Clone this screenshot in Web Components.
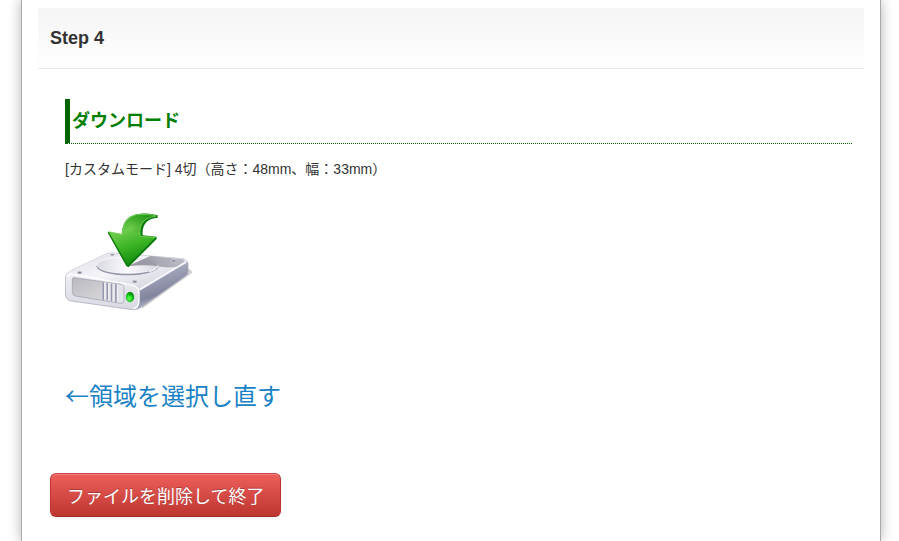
<!DOCTYPE html>
<html lang="ja">
<head>
<meta charset="utf-8">
<title>Step 4</title>
<style>
  body {
    margin: 0;
    background-color: #fff;
    color: #333;
    font: 14px/20px "Liberation Sans", "Noto Sans CJK JP", sans-serif;
  }
</style>
</head>
<body>
<page-panel>
  <step-header>Step 4</step-header>
  <download-section heading="ダウンロード">
    <span slot="info">[カスタムモード] 4切（高さ：48mm、幅：33mm）</span>
    <drive-icon slot="icon"></drive-icon>
    <span slot="back">←領域を選択し直す</span>
  </download-section>
  <danger-button>ファイルを削除して終了</danger-button>
</page-panel>

<script>
class PagePanel extends HTMLElement {
  constructor() {
    super();
    this.attachShadow({mode: "open"});
  }

  style() {
    const css = `
    <style>
      :host {
        display: block;
        box-sizing: border-box;
        min-height: 100vh;
        margin: 0 18px 0 21px;
        padding: 8px 16px 24px;
        border: solid #aaa;
        border-width: 0 1px;
        background-color: #fff;
        box-shadow: 0 0 12px rgba(0, 0, 0, 0.3);
        clip-path: inset(0 -18px);
      }
    </style>
    `;
    return css;
  }

  connectedCallback() {
    this.shadowRoot.innerHTML = `${this.style()}<slot></slot>`;
  }
}

class StepHeader extends HTMLElement {
  constructor() {
    super();
    this.attachShadow({mode: "open"});
  }

  style() {
    const css = `
    <style>
      :host {
        display: block;
        padding: 20px 12px;
        border-bottom: 1px solid #e8e8e8;
        background-image: linear-gradient(#f4f4f4, #fff);
      }
      h2 {
        margin: 0;
        font-size: 18px;
        line-height: 20px;
      }
    </style>
    `;
    return css;
  }

  connectedCallback() {
    this.shadowRoot.innerHTML = `${this.style()}<h2><slot></slot></h2>`;
  }
}

class DownloadSection extends HTMLElement {
  constructor() {
    super();
    this.attachShadow({mode: "open"});
  }

  style() {
    const css = `
    <style>
      :host {
        display: block;
        padding: 30px 12px 62px 27px;
      }
      h3 {
        margin: 0 0 15px;
        padding: 12px 2px;
        border-left: 5px solid #006400;
        border-bottom: 1px dotted #006400;
        color: #008000;
        font-size: 18px;
        line-height: 20px;
      }
      p {
        margin: 0;
      }
      .icon {
        display: block;
        width: fit-content;
        margin: 19px 0 53px;
      }
      .back {
        color: #1a82c4;
        font-size: 24px;
        line-height: 32px;
        font-family: "Noto Sans CJK JP", sans-serif;
        text-decoration: none;
      }
    </style>
    `;
    return css;
  }

  template() {
    const template = document.createElement("template");
    template.innerHTML = `
    ${this.style()}
    <h3>${this.getAttribute("heading")}</h3>
    <p><slot name="info"></slot></p>
    <a class="icon" href="#download" aria-label="ダウンロード"><slot name="icon"></slot></a>
    <p><a class="back" href="#select"><slot name="back"></slot></a></p>
    `;
    return template;
  }

  connectedCallback() {
    const content = this.template().content.cloneNode(true);
    this.shadowRoot.appendChild(content);
  }
}

class DriveIcon extends HTMLElement {
  constructor() {
    super();
    this.attachShadow({mode: "open"});
  }

  template() {
    const template = document.createElement("template");
    template.innerHTML = `
    <style>
      :host, svg {
        display: block;
        width: 128px;
        height: 128px;
      }
    </style>
    <svg viewBox="30 -21 384 384" aria-hidden="true">
      <defs>
        <linearGradient id="top" x1="0" y1="0" x2="1" y2="1">
          <stop offset="0" stop-color="#dcdce4"/>
          <stop offset=".45" stop-color="#f4f4f9"/>
          <stop offset="1" stop-color="#c9c9d6"/>
        </linearGradient>
        <linearGradient id="side" x1="0" y1="0" x2=".35" y2="1">
          <stop offset="0" stop-color="#dfe0ea"/>
          <stop offset=".4" stop-color="#9fa2b8"/>
          <stop offset=".75" stop-color="#82859e"/>
          <stop offset="1" stop-color="#d0d1dc"/>
        </linearGradient>
        <linearGradient id="front" x1="0" y1="0" x2="0" y2="1">
          <stop offset="0" stop-color="#fbfbfe"/>
          <stop offset="1" stop-color="#d8d9e2"/>
        </linearGradient>
        <linearGradient id="bay" x1="0" y1="0" x2="1" y2="1">
          <stop offset="0" stop-color="#b8b8be"/>
          <stop offset="1" stop-color="#e2e2e6"/>
        </linearGradient>
        <linearGradient id="disc" x1="0" y1="0" x2="1" y2="0">
          <stop offset="0" stop-color="#d9d9e2"/>
          <stop offset=".5" stop-color="#fbfbfe"/>
          <stop offset="1" stop-color="#d5d5df"/>
        </linearGradient>
        <linearGradient id="shade" x1="0" y1="0" x2="1" y2="0">
          <stop offset="0" stop-color="#666674"/>
          <stop offset="1" stop-color="#a8a8b4"/>
        </linearGradient>
        <linearGradient id="arrow" gradientUnits="userSpaceOnUse" x1="200" y1="30" x2="250" y2="180">
          <stop offset="0" stop-color="#35a826"/>
          <stop offset=".3" stop-color="#6ccb4a"/>
          <stop offset=".6" stop-color="#3bb424"/>
          <stop offset="1" stop-color="#0b850d"/>
        </linearGradient>
        <linearGradient id="tail" gradientUnits="userSpaceOnUse" x1="225" y1="60" x2="306" y2="30">
          <stop offset="0" stop-color="#1c8f16" stop-opacity="0"/>
          <stop offset=".5" stop-color="#1c9416" stop-opacity=".6"/>
          <stop offset="1" stop-color="#0d780b"/>
        </linearGradient>
        <radialGradient id="lamp" cx=".4" cy=".65" r=".6">
          <stop offset="0" stop-color="#65ff50"/>
          <stop offset=".6" stop-color="#16d51d"/>
          <stop offset="1" stop-color="#079010"/>
        </radialGradient>
      </defs>
      <!-- cast shadow -->
      <path d="M260 312L412 203Q410 193 394 188L270 280Z" fill="#aaa" opacity=".55"/>
      <!-- body -->
      <path d="M44 199L153 147Q160 143 170 144L382 161Q397 163 399 176L399 200Q399 207 392 212L258 307Q246 316 232 314L48 288Q32 284 31 266V225Q31 207 44 199Z" fill="url(#front)" stroke="#a0a2b0" stroke-width="2"/>
      <path d="M251 254L393 168Q399 171 399 180V200Q399 207 392 212L258 307Q250 312 241 313Q251 306 252 290Z" fill="url(#side)"/>
      <path d="M44 199L153 147Q160 143 170 144L382 161Q393 162 397 169L258 252Q246 246 225 242L56 211Q38 207 35 214Q36 204 44 199Z" fill="url(#top)"/>
      <path d="M35 216Q38 206 56 209L225 239Q254 244 252 264V289Q251 309 235 311" fill="none" stroke="#fff" stroke-width="4"/>
      <path d="M254 254L393 171" fill="none" stroke="#f7f7fc" stroke-width="6"/>
      <!-- platter -->
      <ellipse cx="218" cy="184" rx="93" ry="27" fill="#9496a9"/>
      <ellipse cx="218" cy="180" rx="91" ry="25" fill="url(#disc)" stroke="#fff" stroke-width="2"/>
      <path d="M218 184L286 153L382 163Q393 166 387 171L365 185Q335 190 309 184Q270 178 218 184Z" fill="url(#shade)" opacity=".7"/>
      <path d="M309 180Q310 192 282 201" fill="none" stroke="#fff" stroke-width="3"/>
      <g fill="#8a8b99" stroke="#fff" stroke-width="1">
        <ellipse cx="74" cy="203" rx="7" ry="4"/>
        <ellipse cx="172" cy="149" rx="7" ry="3"/>
        <ellipse cx="239" cy="230" rx="7" ry="4"/>
        <ellipse cx="356" cy="168" rx="7" ry="4"/>
      </g>
      <!-- front plate -->
      <path d="M57 218L198 238Q207 240 207 249V286Q207 296 197 295L61 273Q53 271 52 263V223Q52 217 57 218Z" fill="url(#bay)" stroke="#9a9ca8" stroke-width="2"/>
      <path d="M143 231L202 240Q205 242 205 248V285Q205 293 197 293L143 284Z" fill="#e2e3e9"/>
      <path d="M145 232V284M157 234V286M170 236V289M183 238V291" stroke="#9295ad" stroke-width="5"/>
      <path d="M149 233V284M161 235V286M174 237V289M187 239V291" stroke="#fff" stroke-width="2"/>
      <ellipse cx="225" cy="276" rx="12" ry="15" fill="url(#lamp)" stroke="#14851a" stroke-width="1"/>
      <ellipse cx="227" cy="268" rx="5" ry="4" fill="#0a8a12" opacity=".6"/>
      <!-- arrow -->
      <path d="M159 80L200 88C202 48 221 28 257 26C275 25 291 27 308 31V38C277 40 260 58 263 91L305 95V102L220 187L214 183L159 85Z" fill="#0c7a0b"/>
      <path d="M161 80L202 87C204 48 222 29 257 27C274 26 289 28 306 32C274 34 249 53 256 94L303 96L218 181Z" fill="url(#arrow)"/>
      <path d="M212 62C222 37 238 28 257 27C274 26 289 28 306 32C274 34 253 50 254 80L240 84Z" fill="url(#tail)"/>
      <path d="M161 80L202 88C204 48 222 29 257 28Q280 27 302 32" fill="none" stroke="#8be66f" stroke-width="2"/>
      <path d="M302 97L256 94C249 53 273 36 302 34" fill="none" stroke="#87df69" stroke-width="2"/>
    </svg>
    `;
    return template;
  }

  connectedCallback() {
    const content = this.template().content.cloneNode(true);
    this.shadowRoot.appendChild(content);
  }
}

class DangerButton extends HTMLElement {
  constructor() {
    super();
    this.attachShadow({mode: "open"});
  }

  style() {
    const css = `
    <style>
      :host {
        display: block;
        padding: 0 12px;
      }
      button {
        display: block;
        margin: 0;
        padding: 11px 16px;
        border: 1px solid #bd362f;
        border-color: #cf4a48 #bd362f #a52d28;
        border-radius: 6px;
        background-image: linear-gradient(#ee5f5b, #bd362f);
        box-shadow: inset 0 1px 0 rgba(255, 255, 255, 0.2), 0 1px 2px rgba(0, 0, 0, 0.05);
        color: #fff;
        font-family: "Noto Sans CJK JP", sans-serif;
        font-size: 18px;
        line-height: 20px;
        text-shadow: 0 -1px 0 rgba(0, 0, 0, 0.25);
        cursor: pointer;
      }
    </style>
    `;
    return css;
  }

  connectedCallback() {
    this.shadowRoot.innerHTML = `${this.style()}<button type="button"><slot></slot></button>`;
  }
}

window.customElements.define("page-panel", PagePanel);
window.customElements.define("step-header", StepHeader);
window.customElements.define("download-section", DownloadSection);
window.customElements.define("drive-icon", DriveIcon);
window.customElements.define("danger-button", DangerButton);
</script>
</body>
</html>
